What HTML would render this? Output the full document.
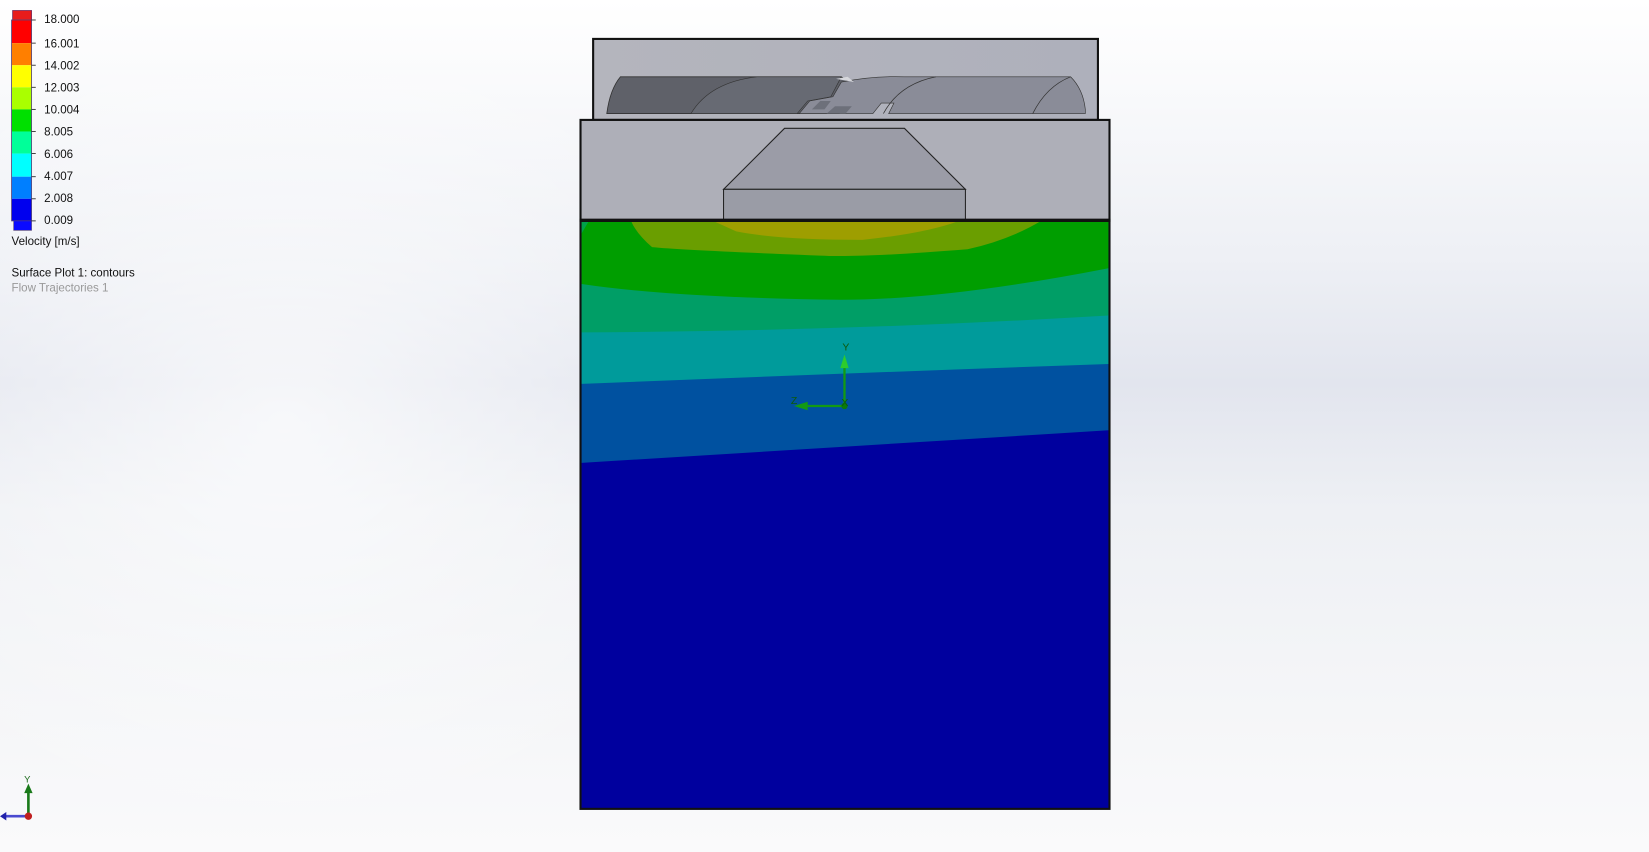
<!DOCTYPE html>
<html><head><meta charset="utf-8"><style>
html,body{margin:0;padding:0;width:1649px;height:852px;overflow:hidden;background:#fff}
svg{display:block}
text{font-family:"Liberation Sans",Arial,sans-serif}
</style></head><body>
<svg width="1649" height="852" viewBox="0 0 1568 810" preserveAspectRatio="none">
<defs>
<linearGradient id="bg" x1="0" y1="0" x2="0" y2="1">
<stop offset="0" stop-color="#ffffff"/>
<stop offset="0.3" stop-color="#eef0f5"/>
<stop offset="0.45" stop-color="#e2e5ee"/>
<stop offset="0.6" stop-color="#eef0f4"/>
<stop offset="1" stop-color="#fafafb"/>
</linearGradient>
<radialGradient id="rg" cx="0.3" cy="0.5" r="0.5">
<stop offset="0" stop-color="#fff" stop-opacity="0.7"/>
<stop offset="1" stop-color="#fff" stop-opacity="0"/>
</radialGradient>
<linearGradient id="panel" x1="0" y1="0" x2="1" y2="0">
<stop offset="0" stop-color="#b4b5bd"/><stop offset="1" stop-color="#aeb0bb"/>
</linearGradient>
</defs>
<rect width="1568" height="810" fill="url(#bg)"/>
<rect width="900" height="810" fill="url(#rg)"/>

<!-- legend -->
<rect x="12" y="10" width="18" height="10" fill="#e81c1c" stroke="#7a2a5a" stroke-width="0.8"/>
<rect x="11" y="19" width="19" height="22" fill="#ff0000"/>
<rect x="11" y="41" width="19" height="21" fill="#ff7f00"/>
<rect x="11" y="62" width="19" height="21" fill="#ffff00"/>
<rect x="11" y="83" width="19" height="21" fill="#aaff00"/>
<rect x="11" y="104" width="19" height="21" fill="#00e000"/>
<rect x="11" y="125" width="19" height="21" fill="#00ff99"/>
<rect x="11" y="146" width="19" height="22" fill="#00ffff"/>
<rect x="11" y="168" width="19" height="21" fill="#007fff"/>
<rect x="11" y="189" width="19" height="21" fill="#0000ee"/>
<rect x="11" y="19" width="19" height="191" fill="none" stroke="#55447a" stroke-width="0.8"/>
<rect x="13" y="210" width="17" height="9" fill="#0a0aff" stroke="#55447a" stroke-width="0.6"/>
<g font-size="11" fill="#111">
<text x="42" y="22">18.000</text><text x="42" y="45">16.001</text><text x="42" y="66">14.002</text>
<text x="42" y="87">12.003</text><text x="42" y="108">10.004</text><text x="42" y="129">8.005</text>
<text x="42" y="150">6.006</text><text x="42" y="171">4.007</text><text x="42" y="192">2.008</text>
<text x="42" y="213">0.009</text>
<text x="11" y="233">Velocity [m/s]</text>
<text x="11" y="263">Surface Plot 1: contours</text>
<text x="11" y="277" fill="#999">Flow Trajectories 1</text>
</g>
<g stroke="#222" stroke-width="0.8">
<line x1="30" y1="19" x2="34" y2="19"/><line x1="30" y1="41" x2="34" y2="41"/><line x1="30" y1="62" x2="34" y2="62"/>
<line x1="30" y1="83" x2="34" y2="83"/><line x1="30" y1="104" x2="34" y2="104"/><line x1="30" y1="125" x2="34" y2="125"/>
<line x1="30" y1="146" x2="34" y2="146"/><line x1="30" y1="168" x2="34" y2="168"/><line x1="30" y1="189" x2="34" y2="189"/>
<line x1="30" y1="210" x2="34" y2="210"/>
</g>

<!-- top panel -->
<rect x="564" y="37" width="480" height="77" fill="url(#panel)" stroke="#111" stroke-width="2"/>
<path d="M590 73 L800 73 L806 77 L798 108 L577 108 Q580 85 590 73Z" fill="#5f6169" stroke="#333" stroke-width="0.8"/>
<path d="M657 108 Q675 78 720 73 L800 73 L790 92 L768 96 L758 108Z" fill="#676a73" stroke="#333" stroke-width="0.6"/>
<path d="M760 108 L770 96 L792 92 L800 78 Q830 72 860 73 L1018 73 Q1030 85 1032 104 L1032 108 L845 108 L850 98 L838 98 L830 108 Z" fill="#8a8c98" stroke="#333" stroke-width="0.6"/>
<path d="M772 104 L780 96 L790 96 L784 104Z M786 108 L794 101 L810 101 L804 108Z" fill="#6d707a"/>
<path d="M840 108 Q855 80 890 73" fill="none" stroke="#333" stroke-width="0.7"/>
<path d="M982 108 Q995 82 1018 73" fill="none" stroke="#333" stroke-width="0.7"/>
<path d="M795 75 L806 73 L812 78 Z" fill="#d6d7dc"/>

<!-- middle box -->
<rect x="552" y="114" width="503" height="96" fill="#aeafb8" stroke="#111" stroke-width="2"/>
<path d="M746 122 L860 122 L918 180 L688 180Z" fill="#9b9ca7" stroke="#222" stroke-width="1"/>
<rect x="688" y="180" width="230" height="29" fill="#9a9ca6" stroke="#222" stroke-width="1"/>

<!-- contour region -->
<rect x="552" y="209" width="503" height="560" fill="#00009e"/>
<path d="M553 210 L1054 210 L1054 409 Q800 425 553 440Z" fill="#0051a0"/>
<path d="M553 210 L1054 210 L1054 346 Q800 355 553 365Z" fill="#009b9b"/>
<path d="M553 210 L1054 210 L1054 300 Q800 315 553 316Z" fill="#009e66"/>
<path d="M553 210 L1054 210 L1054 255 Q900 285 800 285 Q640 283 553 270Z" fill="#009e00"/>
<path d="M568 210 L990 210 Q960 228 920 237 Q820 245 780 243 Q650 238 620 235 Q605 222 600 210Z" fill="#6a9e00"/>
<path d="M678 210 L912 210 Q880 222 820 228 Q740 228 700 220Z" fill="#9e9e00"/>
<path d="M553 210 L560 210 L553 222Z" fill="#00a04a"/>
<rect x="552" y="209" width="503" height="560" fill="none" stroke="#111" stroke-width="2"/>
<line x1="552" y1="209.5" x2="1055" y2="209.5" stroke="#111" stroke-width="3"/>

<!-- triad center -->
<g stroke="#139a13" stroke-width="2.2" fill="#139a13">
<line x1="803" y1="386" x2="803" y2="348"/>
<line x1="803" y1="386" x2="766" y2="386"/>
</g>
<path d="M799 350 L803 337 L807 350Z" fill="#2dcc2d"/>
<path d="M768 382 L755 386 L768 390Z" fill="#139a13"/>
<circle cx="803" cy="386" r="3" fill="#0b7a0b"/>
<g font-size="10" fill="#0b5a0b">
<text x="801" y="333">Y</text><text x="752" y="384">Z</text><text x="800" y="386">X</text>
</g>

<!-- corner triad -->
<line x1="27" y1="776" x2="27" y2="752" stroke="#1a7a1a" stroke-width="2.5"/>
<path d="M23 754 L27 745 L31 754Z" fill="#1a7a1a"/>
<line x1="27" y1="776" x2="4" y2="776" stroke="#4a4ad0" stroke-width="2.5"/>
<path d="M6 772 L0 776 L6 780Z" fill="#2222aa"/>
<circle cx="27" cy="776" r="3.5" fill="#c02020"/>
<text x="23" y="744" font-size="9" fill="#1a6a1a">Y</text>
</svg>
</body></html>
